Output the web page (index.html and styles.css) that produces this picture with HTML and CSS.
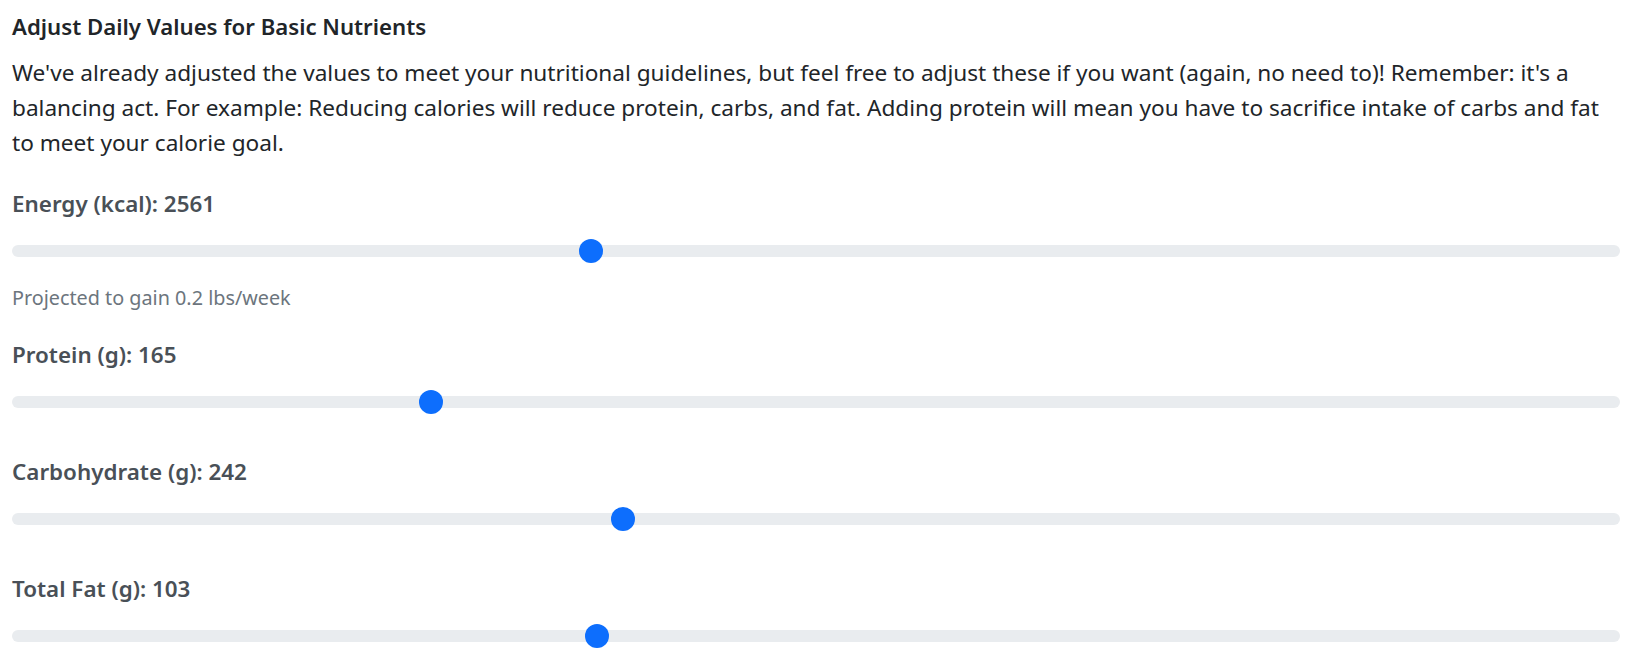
FILE: index.html
```html
<!DOCTYPE html>
<html lang="en">
<head>
<meta charset="utf-8">
<title>Adjust Daily Values for Basic Nutrients</title>
<link rel="stylesheet" href="styles.css">
</head>
<body>
<main class="panel">
  <h5 class="title">Adjust Daily Values for Basic Nutrients</h5>
  <p class="intro">We've already adjusted the values to meet your nutritional guidelines, but feel free to adjust these if you want (again, no need to)! Remember: it's a balancing act. For example: Reducing calories will reduce protein, carbs, and fat. Adding protein will mean you have to sacrifice intake of carbs and fat to meet your calorie goal.</p>

  <div class="field field--first">
    <label class="field-label" for="energy">Energy (kcal): 2561</label>
    <input class="range" id="energy" type="range" min="0" max="1000" value="358">
    <small class="hint">Projected to gain 0.2 lbs/week</small>
  </div>

  <div class="field field--after-hint">
    <label class="field-label" for="protein">Protein (g): 165</label>
    <input class="range" id="protein" type="range" min="0" max="1000" value="257">
  </div>

  <div class="field">
    <label class="field-label" for="carbs">Carbohydrate (g): 242</label>
    <input class="range" id="carbs" type="range" min="0" max="1000" value="378">
  </div>

  <div class="field">
    <label class="field-label" for="fat">Total Fat (g): 103</label>
    <input class="range" id="fat" type="range" min="0" max="1000" value="362">
  </div>
</main>
</body>
</html>
```

FILE: styles.css
```css
* { box-sizing: border-box; }

html, body {
  margin: 0;
  padding: 0;
  background: #ffffff;
}

body {
  font-family: "Noto Sans", "Open Sans", sans-serif;
  color: #212529;
}

.panel {
  display: flex;
  flex-direction: column;
  padding: 0 18px 0 12px;
}

.title {
  margin: 12px 0 0;
  font-size: 22.2px;
  line-height: 30px;
  font-weight: 600;
  color: #212529;
}

.intro {
  max-width: 1596px;
  margin: 13px 0 0;
  font-size: 22.62px;
  line-height: 35px;
  color: #212529;
}

.field {
  display: flex;
  flex-direction: column;
  margin-top: 43px;
}

.field--first {
  margin-top: 29px;
}

.field--after-hint {
  margin-top: 29px;
}

.field-label {
  display: block;
  font-size: 22.4px;
  line-height: 30px;
  font-weight: 600;
  color: #495057;
}

.range {
  -webkit-appearance: none;
  appearance: none;
  display: block;
  width: 100%;
  height: 24px;
  margin: 20px 0 0;
  padding: 0;
  background: transparent;
}

.range::-webkit-slider-runnable-track {
  height: 12px;
  border-radius: 6px;
  background: #e9ecef;
}

.range::-webkit-slider-thumb {
  -webkit-appearance: none;
  appearance: none;
  width: 24px;
  height: 24px;
  margin-top: -6px;
  border: 0;
  border-radius: 50%;
  background: #0d6efd;
}

.hint {
  display: block;
  margin-top: 22px;
  font-size: 19.8px;
  line-height: 26px;
  color: #6c757d;
}
```
